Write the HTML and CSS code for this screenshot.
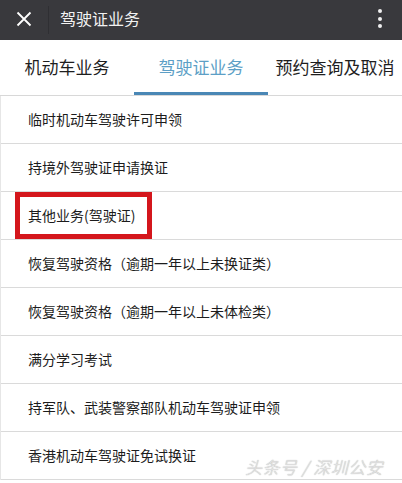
FILE: index.html
```html
<!DOCTYPE html>
<html lang="zh">
<head>
<meta charset="utf-8">
<link rel="stylesheet" href="styles.css">
</head>
<body>
<div class="page">
  <header class="topbar">
    <span class="close">
      <svg width="16" height="16" viewBox="0 0 16 16"><path d="M1.5 1.5L14.5 14.5M14.5 1.5L1.5 14.5" stroke="#fff" stroke-width="1.8" fill="none"/></svg>
    </span>
    <span class="divider"></span>
    <span class="title">驾驶证业务</span>
    <span class="more"><i></i><i></i><i></i></span>
  </header>
  <nav class="tabs">
    <div class="tab">机动车业务</div>
    <div class="tab active">驾驶证业务</div>
    <div class="tab">预约查询及取消</div>
  </nav>
  <ul class="list">
    <li>临时机动车驾驶许可申领</li>
    <li>持境外驾驶证申请换证</li>
    <li class="marked">其他业务(驾驶证)<span class="redbox"></span></li>
    <li>恢复驾驶资格（逾期一年以上未换证类）</li>
    <li>恢复驾驶资格（逾期一年以上未体检类）</li>
    <li>满分学习考试</li>
    <li>持军队、武装警察部队机动车驾驶证申领</li>
    <li>香港机动车驾驶证免试换证</li>
  </ul>
  <div class="watermark">头条号 / 深圳公安</div>
</div>
</body>
</html>
```

FILE: styles.css
```css
* { box-sizing: border-box; }
html, body { margin: 0; padding: 0; background: #fff; }
body {
  font-family: "Noto Sans CJK SC", "Noto Sans", sans-serif;
  width: 402px;
  height: 483px;
  overflow: hidden;
}
.page { position: relative; width: 402px; height: 483px; }
.topbar {
  height: 40px;
  background: #39393d;
  display: flex;
  align-items: center;
  color: #fff;
}
.close { width: 48px; display: flex; justify-content: center; align-items: center; }
.close svg { display: block; margin-top: -2px; }
.divider { width: 1px; height: 28px; background: #2f2f33; }
.title { margin-left: 11px; font-size: 16px; line-height: 1; flex: 1; margin-top: -4px; color: #f2f2f2; }
.more { width: 40px; display: flex; flex-direction: column; align-items: center; gap: 3.5px; margin-right: 2px; margin-top: -3px; }
.more i { display: block; width: 4px; height: 4px; border-radius: 50%; background: #f0f0f0; }
.tabs {
  display: grid;
  grid-template-columns: 134px 134px 134px;
  height: 56px;
  border-bottom: 1px solid #d8d8d8;
}
.tab {
  display: flex;
  align-items: center;
  justify-content: center;
  font-size: 17px;
  color: #1e1e1e;
  white-space: nowrap;
  border-bottom: 3px solid transparent;
}
.tab.active { color: #5d9fc6; border-bottom-color: #4a87b5; }
.list { list-style: none; margin: 0; padding: 0; border-left: 1px solid #e6e6e6; }
.list li {
  position: relative;
  height: 48px;
  border-bottom: 1px solid #dadada;
  display: flex;
  align-items: center;
  padding-left: 27px;
  padding-bottom: 2px;
  font-size: 14px;
  color: #1c1c1c;
}
.redbox {
  position: absolute;
  left: 14px;
  top: 0;
  width: 137px;
  height: 47px;
  border: 5px solid #d4161c;
}
.watermark {
  position: absolute;
  left: 245px;
  top: 454px;
  font-size: 17px;
  color: #e4e4e4;
  letter-spacing: 0.5px;
  font-style: italic;
  font-weight: 300;
  text-shadow: 0 0 1px #999;
  white-space: nowrap;
}
```
